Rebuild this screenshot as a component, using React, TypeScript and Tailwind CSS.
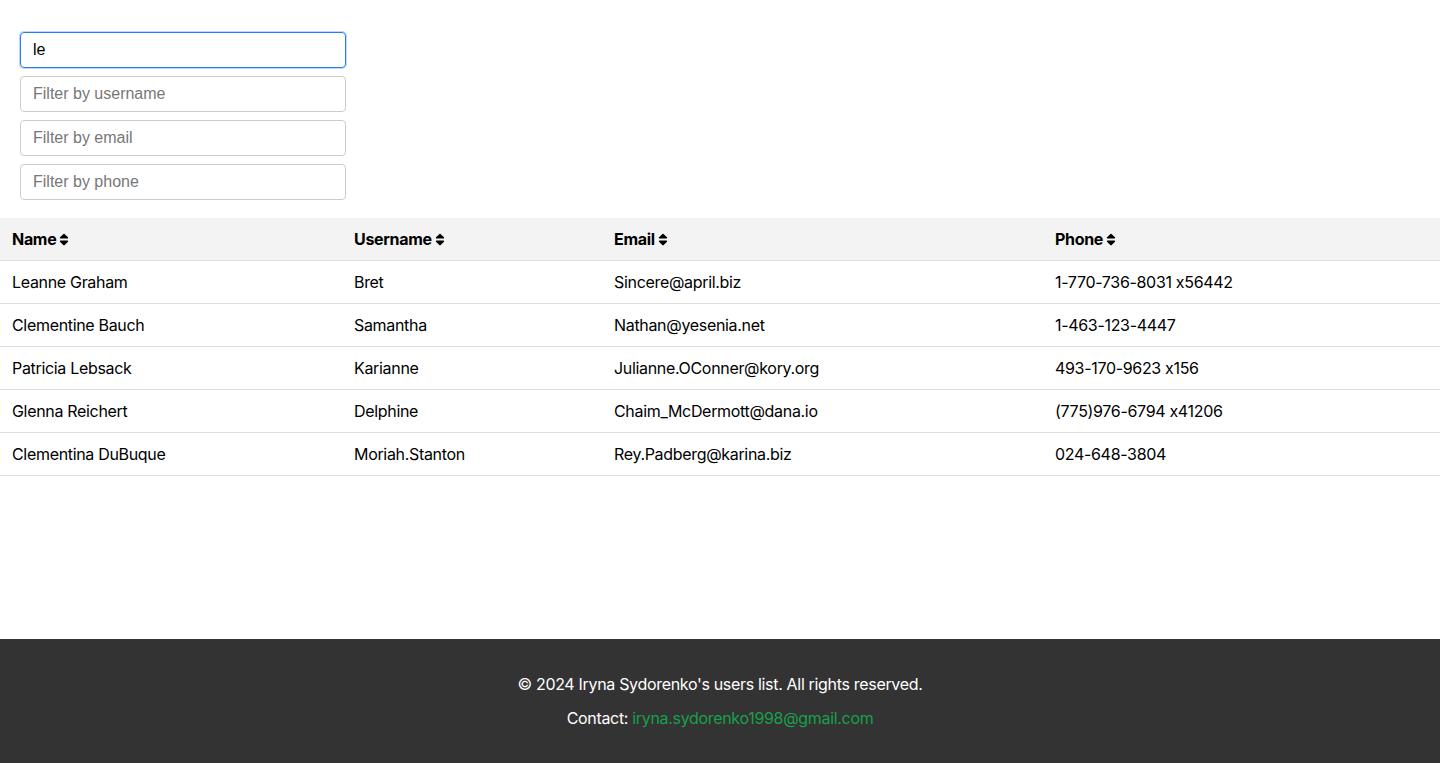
import { FaSort } from 'react-icons/fa';

const users = [
  { name: 'Leanne Graham', username: 'Bret', email: 'Sincere@april.biz', phone: '1-770-736-8031 x56442' },
  { name: 'Clementine Bauch', username: 'Samantha', email: 'Nathan@yesenia.net', phone: '1-463-123-4447' },
  { name: 'Patricia Lebsack', username: 'Karianne', email: 'Julianne.OConner@kory.org', phone: '493-170-9623 x156' },
  { name: 'Glenna Reichert', username: 'Delphine', email: 'Chaim_McDermott@dana.io', phone: '(775)976-6794 x41206' },
  { name: 'Clementina DuBuque', username: 'Moriah.Stanton', email: 'Rey.Padberg@karina.biz', phone: '024-648-3804' },
];

const columns = [
  { label: 'Name', width: 'w-[342px]' },
  { label: 'Username', width: 'w-[260px]' },
  { label: 'Email', width: 'w-[441px]' },
  { label: 'Phone', width: '' },
];

const baseInput =
  "w-[326px] h-9 px-3 rounded border text-base text-black placeholder:text-[#777] font-['Liberation_Sans',Arial,sans-serif] outline-none";

const App = () => {
  return (
    <div className="min-h-screen flex flex-col font-['Inter',sans-serif] tracking-[-0.02em] [font-feature-settings:'calt'_0] text-black bg-white">
      <main className="flex-1">
        <div className="flex flex-col gap-2 px-5 pt-8 pb-[18px]">
          <input
            autoFocus
            defaultValue="le"
            className={`${baseInput} tracking-normal border-[#2a7cf6] shadow-[0_0_0_1px_rgba(42,124,246,0.3)]`}
          />
          <input placeholder="Filter by username" className={`${baseInput} tracking-normal border-[#ccc]`} />
          <input placeholder="Filter by email" className={`${baseInput} tracking-normal border-[#ccc]`} />
          <input placeholder="Filter by phone" className={`${baseInput} tracking-normal border-[#ccc]`} />
        </div>

        <table className="w-full border-collapse text-base">
          <thead>
            <tr className="bg-[#f3f3f3] border-b border-[#ddd]">
              {columns.map((c) => (
                <th key={c.label} className={`${c.width} text-left font-bold px-3 py-3 leading-[18px]`}>
                  <span className="inline-flex items-center">
                    {c.label}
                    <FaSort className="h-[15px] w-[10px] ml-[3px]" />
                  </span>
                </th>
              ))}
            </tr>
          </thead>
          <tbody>
            {users.map((u) => (
              <tr key={u.email} className="border-b border-[#ddd]">
                <td className="px-3 py-3 leading-[18px]">{u.name}</td>
                <td className="px-3 py-3 leading-[18px]">{u.username}</td>
                <td className="px-3 py-3 leading-[18px]">{u.email}</td>
                <td className="px-3 py-3 leading-[18px]">{u.phone}</td>
              </tr>
            ))}
          </tbody>
        </table>
      </main>

      <footer className="bg-[#333] text-white text-center py-5">
        <p className="my-4 leading-[18px]">{"© 2024 Iryna Sydorenko's users list. All rights reserved."}</p>
        <p className="my-4 leading-[18px]">
          Contact:{' '}
          <a href="mailto:iryna.sydorenko1998@gmail.com" className="text-[#16a04c]">
            iryna.sydorenko1998@gmail.com
          </a>
        </p>
      </footer>
    </div>
  );
};

export default App;
